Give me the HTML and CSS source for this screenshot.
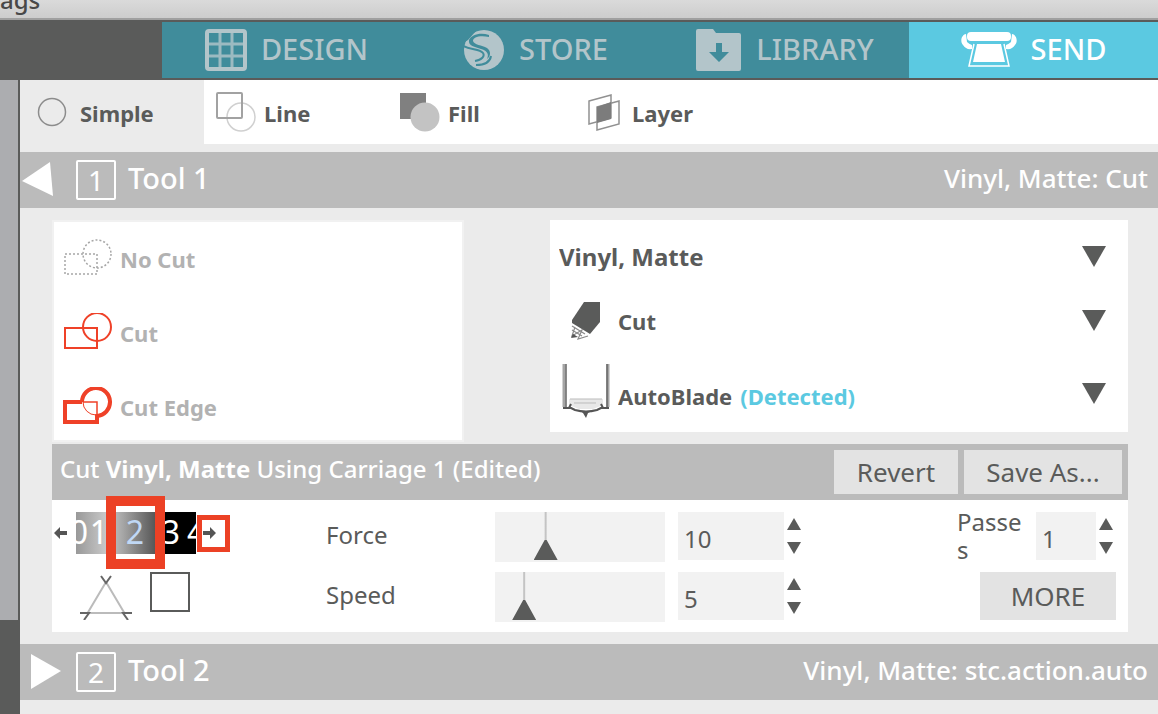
FILE: index.html
```html
<!DOCTYPE html>
<html lang="en">
<head>
  <meta charset="UTF-8" />
  <meta name="viewport" content="width=device-width, initial-scale=1.0"/>
  <title>Send</title>
  <link rel="stylesheet" href="styles.css">
</head>
<body>
  <header class="titlebar"><span>ags</span></header>

  <nav class="main-nav">
    <a href="#design">
      <svg width="42" height="42" viewBox="0 0 42 42" fill="none" stroke="currentColor">
        <rect x="2" y="2" width="38" height="38" rx="2" stroke-width="4"/>
        <path d="M15 3v36M27 3v36M3 15h36M3 27h36" stroke-width="3" opacity=".8"/>
      </svg>
      <span>DESIGN</span>
    </a>
    <a href="#store">
      <svg width="42" height="42" viewBox="0 0 42 42">
        <circle cx="21" cy="21" r="20" fill="currentColor"/>
        <path d="M0 2H13L5 11L0 14z" fill="#408c9b"/>
        <path d="M26 6C17 3 8 6 6 11C5 17 12 18 18 20C25 22 26 26 24 30C28 27 28 22 24 19C19 16 11 16 10 12C10 8 17 6 26 8z" fill="#408c9b"/>
        <path d="M0 17C8 21 17 20 20 24C22 27 19 31 12 32" fill="none" stroke="#408c9b" stroke-width="2"/>
        <path d="M28 27C27 33 23 36 13 36" fill="none" stroke="#408c9b" stroke-width="2"/>
      </svg>
      <span>STORE</span>
    </a>
    <a href="#library">
      <svg width="47" height="44" viewBox="0 0 47 44">
        <path d="M1 3q0-2 2-2h15l3 4h23q2 0 2 2v34q0 2-2 2H3q-2 0-2-2z" fill="currentColor"/>
        <path d="M21 15h6v9h7L24 34 14 24h7z" fill="#408c9b"/>
      </svg>
      <span>LIBRARY</span>
    </a>
    <a href="#send" class="active">
      <svg width="56" height="38" viewBox="0 0 56 38" fill="currentColor">
        <rect x="6" y="1" width="44" height="9" rx="4"/>
        <path d="M5 3C0 4-1 11 2 14q3 5 9 4v-4q-3-1-5-3zM51 3c5 1 6 8 3 11q-3 5-9 4v-4q3-1 5-3z"/>
        <path d="M16 13h24l4 18H12z"/>
        <path d="M13 13L8 35h40L43 13" fill="none" stroke="currentColor" stroke-width="1.5"/>
      </svg>
      <span>SEND</span>
    </a>
  </nav>

  <div class="workspace">
    <aside class="gutter"></aside>

    <main class="panel">
      <div class="modes">
        <button type="button" class="active">
          <svg width="40" height="40" viewBox="0 0 40 40" fill="none" stroke="#8c8c8c" stroke-width="1.5"><circle cx="20" cy="20" r="13.5"/></svg>
          <span>Simple</span>
        </button>
        <button type="button">
          <svg width="40" height="40" viewBox="0 0 40 40" fill="none" stroke-width="1.5">
            <circle cx="25" cy="25" r="14" stroke="#d0d0d0"/>
            <rect x="1" y="1" width="25" height="25" rx="1" stroke="#a2a2a2" stroke-width="2"/>
          </svg>
          <span>Line</span>
        </button>
        <button type="button">
          <svg width="40" height="40" viewBox="0 0 40 40">
            <rect width="26" height="26" y="1" fill="#808080"/>
            <circle cx="25" cy="25" r="14.5" fill="#c3c3c3"/>
          </svg>
          <span>Fill</span>
        </button>
        <button type="button">
          <svg width="40" height="40" viewBox="0 0 40 40" fill="none" stroke="#919191" stroke-width="1.5">
            <path d="M5 9l22-6v23L5 32z"/>
            <path d="M13 15l22-6v23l-22 6z"/>
            <path d="M13 15l14-5v17l-14 4z" fill="#7c7c7c" stroke="none"/>
          </svg>
          <span>Layer</span>
        </button>
      </div>

      <div class="tool-bar">
        <button type="button" class="toggle" aria-label="Collapse Tool 1">
          <svg width="44" height="40" viewBox="0 0 44 40"><path d="M2 21L30 2l3 34z" fill="#fff"/></svg>
        </button>
        <span class="tool-no">1</span>
        <h2>Tool 1</h2>
        <span class="summary">Vinyl, Matte: Cut</span>
      </div>

      <section class="settings">
        <div class="choices">
          <div class="line-types">
            <button type="button">
              <svg width="50" height="40" viewBox="0 0 50 40" fill="none" stroke="#a6a6a6" stroke-width="1.5" stroke-dasharray="2 2">
                <rect x="3" y="15" width="32" height="20"/><circle cx="35" cy="15" r="14"/>
              </svg>
              No Cut
            </button>
            <button type="button">
              <svg width="50" height="40" viewBox="0 0 50 40" fill="none" stroke="#ef4128" stroke-width="2">
                <rect x="3" y="15" width="32" height="20"/><circle cx="35" cy="14" r="14"/>
              </svg>
              Cut
            </button>
            <button type="button">
              <svg width="50" height="40" viewBox="0 0 50 40" fill="none" stroke="#ef4128">
                <path d="M21 15H35V29" stroke-width="1.5"/><circle cx="34" cy="15" r="13" stroke-width="1"/>
                <path d="M20 15H3V35H35V29A14 14 0 1 0 20 15" stroke-width="4"/>
              </svg>
              Cut Edge
            </button>
          </div>

          <div class="selects">
            <div class="pick">
              <select class="material" aria-label="Material"><option>Vinyl, Matte</option></select>
              <svg class="caret" width="24" height="22" viewBox="0 0 24 22"><path d="M0 0h24L12 21z"/></svg>
            </div>
            <div class="pick">
              <svg width="48" height="44" viewBox="0 0 48 44">
                <path d="M22 3h16v20L28 35 10 24V21z" fill="#5a5b5a"/>
                <path d="M10 27l13 8M10 31l10 6M13 28l-3 9 10-6-4 9 10-3" fill="none" stroke="#8a8a8a" stroke-width="1.2"/>
                <path d="M9 39l2-4 5 3z" fill="#555"/>
              </svg>
              <select aria-label="Action"><option>Cut</option></select>
              <svg class="caret" width="24" height="22" viewBox="0 0 24 22"><path d="M0 0h24L12 21z"/></svg>
            </div>
            <div class="pick blade">
              <svg width="48" height="60" viewBox="0 0 48 60" fill="none">
                <path d="M7 35h34v6l-10 4H17L7 41z" fill="#e8e8e8"/>
                <path d="M8 35h32M12 39h22" stroke="#bbb"/>
                <path d="M2 0v43M46 0v43" stroke="#a5a5a5" stroke-width="3"/>
                <path d="M4 0v43M45 0v43" stroke="#666" stroke-width="1.5"/>
                <path d="M1 44h6l2-4M47 44h-6l-2-4M7 43l6 3q11 3 22 0l6-3" stroke="#555" stroke-width="2"/>
                <path d="M18 47h12l-4 2-2 5-3-5z" fill="#555"/>
              </svg>
              <select aria-label="Tool"><option>AutoBlade</option></select>
              <span class="detected">(Detected)</span>
              <svg class="caret" width="24" height="22" viewBox="0 0 24 22"><path d="M0 0h24L12 21z"/></svg>
            </div>
          </div>
        </div>

        <div class="preset">
          <p>Cut <strong>Vinyl, Matte</strong> Using Carriage 1 (Edited)</p>
          <button type="button" class="btn revert">Revert</button>
          <button type="button" class="btn save">Save As...</button>
        </div>

        <div class="params">
          <div class="depth">
            <button type="button" class="arrow" aria-label="Previous depth">
              <svg width="14" height="12" viewBox="0 0 14 12"><path d="M0 6l6-6v4h7v4H6v4z" fill="#555"/></svg>
            </button>
            <div class="dial">
              <span class="first">0</span><span>1</span><span class="current">2</span><span>3</span><span class="last">4</span>
              <i class="mark mark-value"></i>
            </div>
            <button type="button" class="arrow next" aria-label="Next depth">
              <svg width="14" height="12" viewBox="0 0 14 12"><path d="M13 6L7 0v4H0v4h7v4z" fill="#555"/></svg>
              <i class="mark mark-next"></i>
            </button>
          </div>
          <label for="force">Force</label>
          <input type="range" id="force" min="1" max="35" value="10">
          <div class="stepper">
            <input type="number" value="10" aria-label="Force value">
            <span class="steps">
              <button type="button" aria-label="Increase force"><svg width="14" height="12" viewBox="0 0 14 12"><path d="M7 0l7 12H0z"/></svg></button>
              <button type="button" aria-label="Decrease force"><svg width="14" height="12" viewBox="0 0 14 12"><path d="M0 0h14L7 12z"/></svg></button>
            </span>
          </div>
          <div class="passes">
            <label for="passes">Passes</label>
            <div class="stepper">
              <input type="number" id="passes" value="1">
              <span class="steps">
                <button type="button" aria-label="More passes"><svg width="14" height="12" viewBox="0 0 14 12"><path d="M7 0l7 12H0z"/></svg></button>
                <button type="button" aria-label="Fewer passes"><svg width="14" height="12" viewBox="0 0 14 12"><path d="M0 0h14L7 12z"/></svg></button>
              </span>
            </div>
          </div>

          <div class="overcut">
            <label for="overcut">
              <svg width="52" height="48" viewBox="0 0 52 48" fill="none" stroke-width="2">
                <path d="M26 10L7 42M26 10l19 32M8 41h36" stroke="#bbb"/>
                <path d="M21 4l5 7 5-7M0 41h9L4 48M52 41h-9l5 7" stroke="#666"/>
              </svg>
            </label>
            <input type="checkbox" id="overcut" aria-label="Line segment overcut">
          </div>
          <label for="speed">Speed</label>
          <input type="range" id="speed" min="1" max="35" value="5">
          <div class="stepper">
            <input type="number" value="5" aria-label="Speed value">
            <span class="steps">
              <button type="button" aria-label="Increase speed"><svg width="14" height="12" viewBox="0 0 14 12"><path d="M7 0l7 12H0z"/></svg></button>
              <button type="button" aria-label="Decrease speed"><svg width="14" height="12" viewBox="0 0 14 12"><path d="M0 0h14L7 12z"/></svg></button>
            </span>
          </div>
          <button type="button" class="btn more">MORE</button>
        </div>
      </section>

      <div class="tool-bar">
        <button type="button" class="toggle" aria-label="Expand Tool 2">
          <svg width="44" height="40" viewBox="0 0 44 40"><path d="M11 2l30 17-30 18z" fill="#fff"/></svg>
        </button>
        <span class="tool-no">2</span>
        <h2>Tool 2</h2>
        <span class="summary">Vinyl, Matte: stc.action.auto</span>
      </div>
    </main>
  </div>
</body>
</html>
```
FILE: styles.css
```css
* {
  box-sizing: border-box;
}
body {
  margin: 0;
  min-height: 100vh;
  display: flex;
  flex-direction: column;
  font-family: "Noto Sans", "Open Sans", sans-serif;
  font-size: 24px;
  line-height: 28px;
  color: #5a5b5a;
  background: #ebebeb;
}
button, input, select {
  font: inherit;
  color: inherit;
  border: 0;
  padding: 0;
  margin: 0;
  background: none;
  border-radius: 0;
}
svg {
  display: block;
  flex: none;
}

/* window title */
.titlebar {
  display: flex;
  align-items: flex-end;
  height: 20px;
  overflow: hidden;
  background: linear-gradient(#dadada, #cdcdcd);
  border-bottom: 2px solid #a0a0a0;
  color: #484848;
  font-weight: 500;
}
.titlebar span {
  line-height: 36px;
}

/* main tabs */
.main-nav {
  display: flex;
  padding: 2px 0 2px 162px;
  background: #5a5b5a;
}
.main-nav a {
  flex: 1;
  display: flex;
  align-items: center;
  justify-content: center;
  gap: 14px;
  height: 56px;
  font-size: 29px;
  font-weight: 500;
  color: #b3c5ca;
  background: #408c9b;
  text-decoration: none;
}
.main-nav span {
  padding-bottom: 2px;
}
.main-nav .active {
  color: #fff;
  background: #5bc9e1;
}

.workspace {
  flex: 1;
  display: flex;
}
.gutter {
  width: 20px;
  background: linear-gradient(#acadb0, #acadb0) no-repeat 0 0 / 18px 540px, #5a5b5a;
}
.panel {
  flex: 1;
}

/* Simple / Line / Fill / Layer */
.modes {
  display: flex;
  margin-bottom: 8px;
  background: #fff;
}
.modes button {
  display: flex;
  align-items: center;
  gap: 8px;
  width: 184px;
  height: 64px;
  padding-left: 12px;
  font-size: 22px;
  font-weight: bold;
}
.modes span {
  padding-top: 2px;
}
.modes .active {
  background: #ebebeb;
}

.tool-bar {
  display: flex;
  align-items: center;
  height: 56px;
  padding-right: 10px;
  background: #bbb;
  color: #fff;
}
.toggle {
  margin-right: 12px;
}
.tool-no {
  width: 40px;
  height: 40px;
  margin-right: 12px;
  border: 2px solid #fff;
  border-radius: 2px;
  font-size: 28px;
  line-height: 36px;
  text-align: center;
}
.tool-bar h2 {
  margin: 0;
  padding-bottom: 4px;
  font-size: 29px;
  font-weight: 500;
}
.summary {
  margin-left: auto;
  padding-bottom: 4px;
  font-size: 26px;
  font-weight: 500;
}

.settings {
  padding: 12px 30px 12px 32px;
}
.choices {
  display: flex;
  align-items: flex-start;
  gap: 86px;
  padding-bottom: 2px;
  font-weight: bold;
}
.line-types {
  width: 412px;
  border-left: 2px solid #f1f1f1;
  border-right: 2px solid #f1f1f1;
  background: #fff;
  box-shadow: inset 0 2px #f1f1f1, inset 0 -2px #f1f1f1;
}
.line-types button {
  display: flex;
  align-items: center;
  gap: 8px;
  width: 100%;
  height: 74px;
  padding: 4px 0 0 8px;
  font-size: 22px;
  font-weight: bold;
  color: #b2b2b2;
}
.selects {
  flex: 1;
  display: grid;
  grid-template-rows: 74px 54px 84px;
  padding: 0 22px 0 12px;
  background: #fff;
  font-size: 22px;
}
.pick {
  display: flex;
  align-items: center;
  gap: 8px;
}
.pick select {
  appearance: none;
  field-sizing: content;
}
.pick .material {
  margin-left: -3px;
  font-size: 24px;
}
.blade {
  padding-top: 8px;
}
.blade select, .detected {
  padding-top: 4px;
}
.detected {
  color: #5bc9e1;
}
.caret {
  margin-left: auto;
}
.caret, .steps svg {
  fill: #5a5b5a;
}

.preset {
  display: flex;
  align-items: center;
  gap: 6px;
  height: 56px;
  padding: 0 6px 0 8px;
  background: #bbb;
  color: #fff;
}
.preset p {
  margin: 0 auto 0 0;
  padding-bottom: 6px;
  font-weight: 500;
}
.btn {
  height: 44px;
  background: #e3e3e3;
  color: #5a5b5a;
  font-size: 26px;
}
.revert {
  width: 124px;
}
.save {
  width: 158px;
}

.params {
  display: grid;
  grid-template-columns: 274px 169px 170px 122px 1fr;
  grid-template-rows: 50px 50px;
  row-gap: 10px;
  padding: 12px 12px 10px 0;
  background: #fff;
}
.params > label {
  line-height: 46px;
}
.depth {
  display: flex;
  align-items: center;
  height: 42px;
}
.arrow {
  width: 24px;
  display: flex;
  justify-content: center;
}
.arrow svg {
  margin-right: 6px;
}
.next {
  position: relative;
  width: 34px;
}
.dial {
  position: relative;
  display: grid;
  grid-template-columns: 12px 22px 50px 22px 14px;
  justify-items: center;
  width: 120px;
  height: 42px;
  font-size: 32px;
  line-height: 40px;
  color: #fff;
  background: linear-gradient(90deg, #999, #c8c8c8 30px, #a8a8a8 46px, #858585 60px, #555 80px, #000 88px);
  clip-path: inset(-20px 0);
}
.dial .current {
  color: #c0d8f5;
}
.dial .first {
  justify-self: end;
}
.dial .last {
  justify-self: start;
  padding-left: 5px;
}
.mark {
  position: absolute;
  border: 5px solid #ec4125;
}
.mark-value {
  top: -16px;
  left: 30px;
  width: 59px;
  height: 73px;
  border-width: 10px;
}
.mark-next {
  top: -12px;
  left: 1px;
  width: 33px;
  height: 37px;
}
.overcut {
  display: flex;
  gap: 18px;
  padding-left: 28px;
}
.overcut input {
  appearance: none;
  width: 40px;
  height: 40px;
  border: 2px solid #5a5b5a;
}

input[type="range"] {
  appearance: none;
  width: 170px;
  height: 50px;
  background: #f2f2f2;
}
input[type="range"]::-webkit-slider-thumb {
  appearance: none;
  width: 24px;
  height: 50px;
  background: linear-gradient(#c4c4c4 28px, #5a5b5a 28px);
  clip-path: polygon(11px 0, 13px 0, 13px 28px, 24px 48px, 0 48px, 11px 28px);
}
.stepper {
  display: flex;
  gap: 3px;
  padding-left: 13px;
}
.stepper input {
  appearance: textfield;
  width: 106px;
  height: 48px;
  padding: 4px 0 0 6px;
  background: #f2f2f2;
}
.stepper input::-webkit-inner-spin-button {
  display: none;
}
.steps {
  display: flex;
  flex-direction: column;
  gap: 12px;
  padding-top: 6px;
}
.passes {
  display: flex;
  justify-content: flex-end;
  padding-right: 3px;
}
.passes label {
  width: 66px;
  margin-top: -4px;
  overflow-wrap: anywhere;
}
.passes input {
  width: 60px;
}
.more {
  justify-self: end;
  width: 136px;
  height: 48px;
}
```
